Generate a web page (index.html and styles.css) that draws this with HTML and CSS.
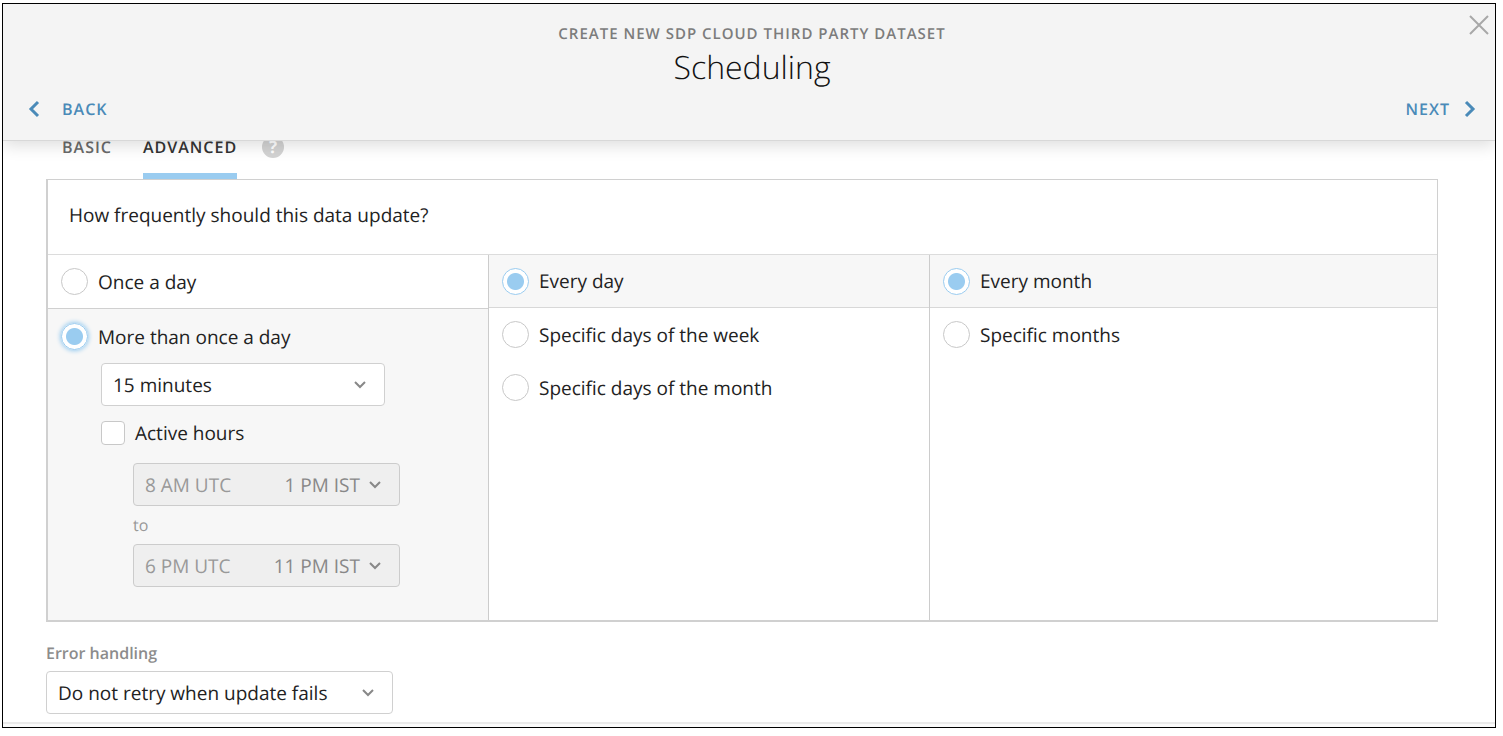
FILE: index.html
```html
<!DOCTYPE html>
<html lang="en">
<head>
  <meta charset="UTF-8">
  <meta name="viewport" content="width=device-width, initial-scale=1.0">
  <title>Scheduling</title>
  <link rel="stylesheet" href="styles.css">
</head>
<body>
  <div class="wizard">
    <header class="wizard-header">
      <p class="subtitle">Create new SDP Cloud Third Party Dataset</p>
      <h1>Scheduling</h1>
      <nav class="wizard-nav">
        <button class="nav-button">
          <svg width="12" height="18" viewBox="0 0 12 18"><path d="M10 2 3 9l7 7"/></svg>
          Back
        </button>
        <button class="nav-button">
          Next
          <svg width="12" height="18" viewBox="0 0 12 18"><path d="M2 2l7 7-7 7"/></svg>
        </button>
      </nav>
      <button class="close" aria-label="Close">
        <svg width="20" height="20" viewBox="0 0 20 20"><path d="M1 1l18 18M19 1L1 19"/></svg>
      </button>
    </header>

    <main class="content">
      <div class="tabs">
        <button class="tab">Basic</button>
        <button class="tab active">Advanced</button>
        <span class="help">?</span>
      </div>

      <section class="panel">
        <h2 class="question">How frequently should this data update?</h2>
        <div class="columns">
          <div class="column">
            <label class="option"><input type="radio" name="times">Once a day</label>
            <div class="selected">
              <label class="option"><input class="focused" type="radio" name="times" checked>More than once a day</label>
              <div class="details">
                <div class="select interval">
                  <select aria-label="Interval"><option>15 minutes</option></select>
                  <svg width="14" height="10" viewBox="0 0 14 10"><path d="M2 2l5 5 5-5"/></svg>
                </div>
                <label class="check"><input type="checkbox">Active hours</label>
                <div class="hours">
                  <div class="select time">
                    <select id="from" aria-label="From" disabled><option>8 AM UTC</option></select>
                    <span class="local">1 PM IST</span>
                    <svg width="14" height="10" viewBox="0 0 14 10"><path d="M2 2l5 5 5-5"/></svg>
                  </div>
                  <label class="to" for="until">to</label>
                  <div class="select time">
                    <select id="until" disabled><option>6 PM UTC</option></select>
                    <span class="local">11 PM IST</span>
                    <svg width="14" height="10" viewBox="0 0 14 10"><path d="M2 2l5 5 5-5"/></svg>
                  </div>
                </div>
              </div>
            </div>
          </div>
          <div class="column">
            <label class="option head"><input type="radio" name="days" checked>Every day</label>
            <label class="option"><input type="radio" name="days">Specific days of the week</label>
            <label class="option"><input type="radio" name="days">Specific days of the month</label>
          </div>
          <div class="column">
            <label class="option head"><input type="radio" name="months" checked>Every month</label>
            <label class="option"><input type="radio" name="months">Specific months</label>
          </div>
        </div>
      </section>

      <label class="field-label" for="errors">Error handling</label>
      <div class="select errors">
        <select id="errors"><option>Do not retry when update fails</option></select>
        <svg width="14" height="10" viewBox="0 0 14 10"><path d="M2 2l5 5 5-5"/></svg>
      </div>
    </main>
    <footer class="wizard-footer"></footer>
  </div>
</body>
</html>
```
FILE: styles.css
```css
* {
  box-sizing: border-box;
}

body {
  margin: 3px 7px 8px 2px;
  background: #fff;
  color: #222;
  font-family: "Open Sans", sans-serif;
  font-size: 19px;
  text-rendering: geometricPrecision;
}

button, select {
  font-family: inherit;
  text-rendering: inherit;
}

svg {
  fill: none;
  stroke: currentColor;
}

.wizard {
  border: 1px solid #000;
}

/* header */
.wizard-header {
  position: relative;
  z-index: 1;
  padding: 18px 19px 18px 25px;
  background: #f4f4f4;
  border-bottom: 1px solid #d8d8d8;
  box-shadow: 0 4px 16px rgba(0, 0, 0, 0.14);
  text-align: center;
}

.subtitle {
  margin: 0;
  color: #7c7c7c;
  font-size: 15px;
  font-weight: 600;
  line-height: 24px;
  letter-spacing: 1px;
  text-transform: uppercase;
}

h1 {
  margin: 0;
  color: #111;
  font-size: 32px;
  font-weight: 300;
  line-height: 44px;
}

.wizard-nav {
  display: flex;
  justify-content: space-between;
  margin-top: 6px;
}

.nav-button {
  display: flex;
  align-items: center;
  gap: 14px;
  padding: 0;
  border: 0;
  background: none;
  color: #4a8ab8;
  font-size: 16px;
  font-weight: 600;
  line-height: 26px;
  letter-spacing: 1px;
  text-transform: uppercase;
  cursor: pointer;
}

.nav-button:first-child {
  gap: 22px;
}

.nav-button svg {
  stroke-width: 3;
}

.close {
  position: absolute;
  top: 11px;
  right: 6px;
  display: flex;
  padding: 0;
  border: 0;
  background: none;
  color: #a8a8a8;
  cursor: pointer;
}

.close svg {
  stroke-width: 2;
}

/* tabs */
.content {
  padding: 0 57px 8px 43px;
}

.tabs {
  display: flex;
  align-items: flex-start;
  margin-top: -5px;
  padding-left: 16px;
}

.tab {
  height: 43px;
  margin-right: 31px;
  padding: 0 0 14px;
  border: 0;
  border-bottom: 6px solid transparent;
  background: none;
  color: #6a6a6a;
  font-size: 16px;
  font-weight: 600;
  line-height: 23px;
  letter-spacing: 1px;
  text-transform: uppercase;
  cursor: pointer;
}

.tab.active {
  margin-right: 25px;
  border-color: #9accf0;
  color: #333;
}

.help {
  width: 22px;
  height: 22px;
  border-radius: 50%;
  background: #d3d3d3;
  color: #fff;
  font-size: 17px;
  font-weight: 700;
  line-height: 22px;
  text-align: center;
}

/* schedule panel */
.panel {
  border: solid #d0d0d0;
  border-width: 1px 1px 2px 2px;
}

.question {
  margin: 0;
  padding: 20px 21px 23px;
  border-bottom: 1px solid #dcdcdc;
  font-size: 19px;
  font-weight: 400;
  line-height: 31px;
}

.columns {
  display: grid;
  grid-template-columns: 440fr 441fr 508fr;
}

.column + .column {
  border-left: 1px solid #ccc;
}

.option {
  display: flex;
  align-items: center;
  gap: 10px;
  height: 53px;
  padding: 0 13px;
}

.option.head {
  background: #f7f7f7;
  border-bottom: 1px solid #d8d8d8;
}

.selected {
  padding: 1px 0 33px;
  border-top: 1px solid #d0d0d0;
  background: #f7f7f7;
}

input {
  flex: none;
  appearance: none;
  margin: 0;
  border: 1px solid #c8c8c8;
  background: #fff;
}

input[type="radio"] {
  width: 27px;
  height: 27px;
  border-radius: 50%;
}

input[type="radio"]:checked {
  border-color: #9accf0;
  background: radial-gradient(circle, #9accf0 8px, #fff 9px);
}

input.focused {
  box-shadow: 0 0 4px 1px #9accf0;
}

.details {
  padding-left: 53px;
}

.select {
  position: relative;
}

.select select {
  appearance: none;
  display: block;
  width: 100%;
  height: 43px;
  padding: 0 11px;
  border: 1px solid #d0d0d0;
  border-radius: 4px;
  background: #fff;
  color: #222;
  font-size: 19px;
}

.select select:disabled {
  border-color: #ccc;
  background: #efefef;
  color: #999;
  opacity: 1;
}

.select svg {
  position: absolute;
  top: 17px;
  right: 18px;
  color: #888;
  stroke-width: 2;
  pointer-events: none;
}

.interval {
  width: 284px;
}

.check {
  display: flex;
  align-items: center;
  gap: 10px;
  height: 53px;
}

input[type="checkbox"] {
  width: 24px;
  height: 24px;
  border-radius: 4px;
}

.hours {
  padding: 4px 0 0 32px;
}

.time {
  width: 267px;
}

.local {
  position: absolute;
  top: 0;
  right: 40px;
  color: #888;
  line-height: 44px;
  pointer-events: none;
}

.to {
  display: block;
  color: #999;
  font-size: 16px;
  line-height: 38px;
}

/* error handling */
.field-label {
  display: block;
  margin-top: 18px;
  color: #8c8c8c;
  font-size: 16px;
  font-weight: 600;
  line-height: 26px;
}

.errors {
  width: 347px;
  margin-top: 5px;
}

.wizard-footer {
  height: 5px;
  border-top: 2px solid #eaeaea;
  background: #fafafa;
}
```
